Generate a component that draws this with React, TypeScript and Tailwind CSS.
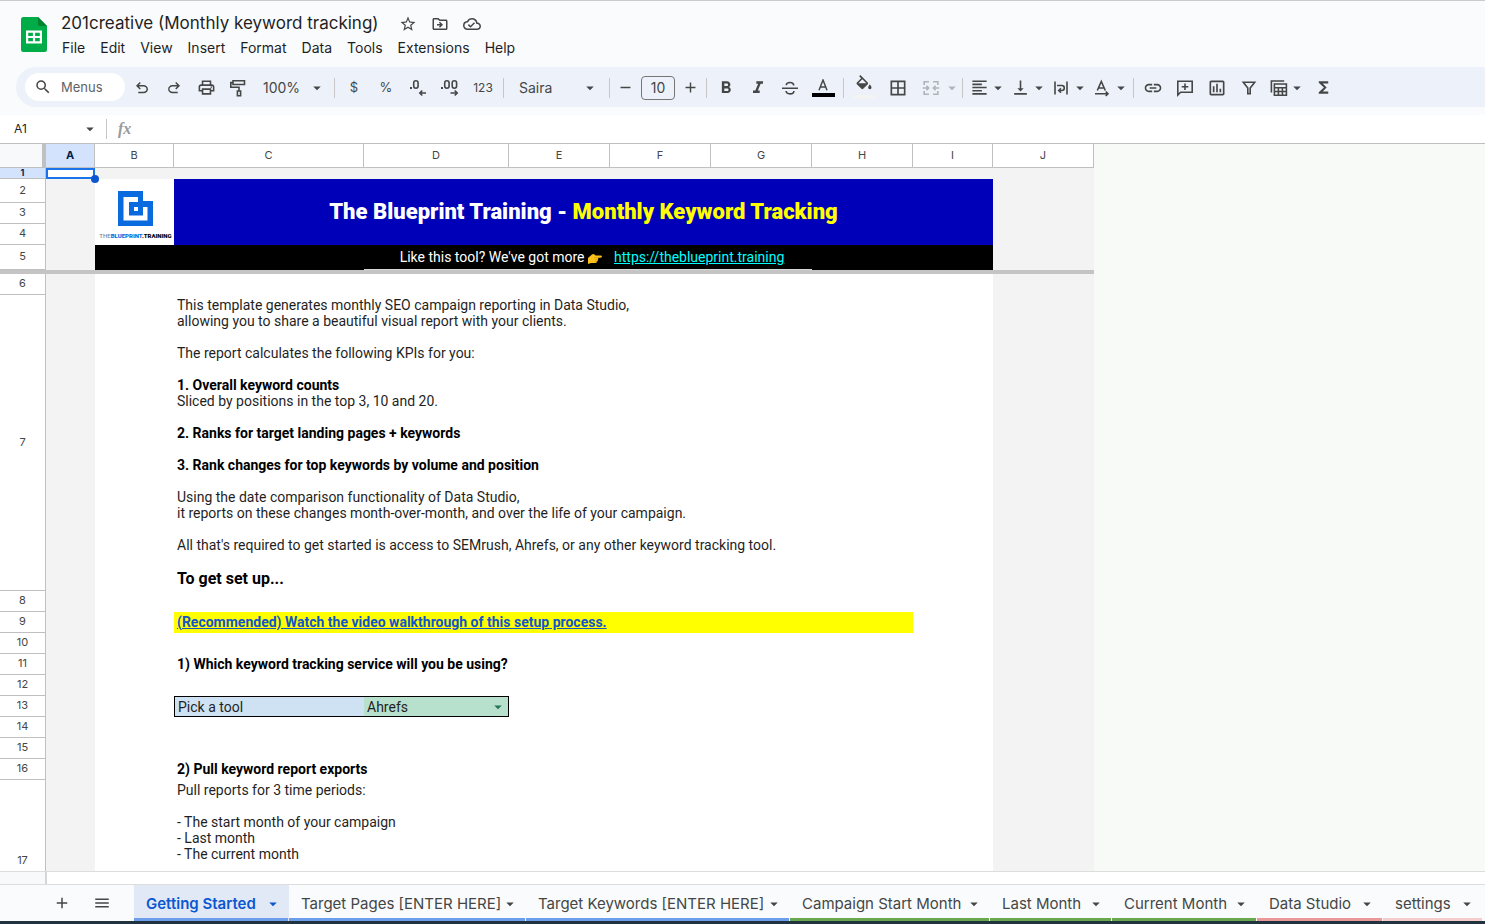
import React from "react";
import {
  MdStarBorder,
  MdOutlineDriveFileMove,
  MdOutlineCloudDone,
  MdSearch,
  MdOutlinePrint,
  MdArrowDropDown,
  MdRemove,
  MdAdd,
  MdFormatBold,
  MdFormatItalic,
  MdBorderAll,
  MdFormatAlignLeft,
  MdVerticalAlignBottom,
  MdLink,
  MdOutlineInsertChart,
  MdFunctions,
  MdMenu,
} from "react-icons/md";

const UI = "font-[Inter,'Liberation_Sans',sans-serif]";

function SheetsLogo() {
  return (
    <svg className="h-[35px] w-[26px]" viewBox="0 0 26 35" aria-hidden="true">
      <path d="M2.5 0H17l9 9v23.500a2.500 2.500 0 0 1-2.500 2.500h-21A2.500 2.500 0 0 1 0 32.500v-30A2.500 2.500 0 0 1 2.500 0Z" fill="#00ac47" />
      <path d="M17 0l9 9h-7a2 2 0 0 1-2-2Z" fill="#00832d" />
      <path fillRule="evenodd" d="M5 13.500h16v13H5ZM7.200 15.700v3.200h4.700v-3.200ZM14.100 15.700v3.200h4.700v-3.200ZM7.200 21.100v3.200h4.700v-3.200ZM14.100 21.100v3.200h4.700v-3.200Z" fill="#fff" />
    </svg>
  );
}

type IconProps = { className?: string; children: React.ReactNode };
function Stroke({ className = "size-[18px] shrink-0", children }: IconProps) {
  return (
    <svg className={className} viewBox="0 0 18 18" fill="none" stroke="currentColor" strokeWidth="1.600" aria-hidden="true">
      {children}
    </svg>
  );
}

const Undo = () => (
  <svg className="size-[18px]" viewBox="0 -960 960 960" fill="currentColor" aria-hidden="true">
    <path d="M280-200v-80h284q63 0 109.500-40T720-420q0-60-46.500-100T564-560H312l104 104-56 56-200-200 200-200 56 56-104 104h252q97 0 163.500 63T800-420q0 94-66.500 157T564-200H280Z" />
  </svg>
);
const Redo = () => (
  <svg className="size-[18px]" viewBox="0 -960 960 960" fill="currentColor" aria-hidden="true">
    <path d="M396-200q-97 0-163.500-63T166-420q0-94 66.500-157T396-640h252L544-744l56-56 200 200-200 200-56-56 104-104H396q-63 0-109.500 40T240-420q0 60 46.500 100T396-280h284v80H396Z" />
  </svg>
);
const Paint = () => (
  <Stroke>
    <path d="M4 1.800h11.500v3.700H4zM4 3.600H1.800v4.600H10V12M8.400 12h3.200v4.800H8.400z" />
  </Stroke>
);
const DecDecrease = () => (
  <Stroke>
    <path d="M2 10V8" strokeWidth="2" />
    <rect x="4.700" y="1.800" width="4.400" height="7.400" rx="2.200" />
    <path d="M17 14H11M13.300 11.500 10.800 14l2.500 2.500" />
  </Stroke>
);
const DecIncrease = () => (
  <Stroke>
    <path d="M1 10V8" strokeWidth="2" />
    <rect x="3.700" y="1.800" width="4.400" height="7.400" rx="2.200" />
    <rect x="11.200" y="1.800" width="4.400" height="7.400" rx="2.200" />
    <path d="M9.500 14h6.500M13.700 11.500l2.500 2.500-2.500 2.500" />
  </Stroke>
);
const Strike = () => (
  <Stroke>
    <path d="M1 9.200h16M12.800 6.400C12.600 4.500 11 3.500 9 3.500S5.300 4.600 5.300 6.300M5 12c.3 1.900 1.900 2.900 4 2.900s3.900-1 3.900-2.900" />
  </Stroke>
);
const Bucket = () => (
  <svg className="size-5" viewBox="0 0 24 24" fill="currentColor" aria-hidden="true">
    <path d="M16.560 8.940 7.620 0 6.210 1.410l2.380 2.380-5.150 5.150a1.490 1.490 0 0 0 0 2.120l5.500 5.500c.29.29.68.44 1.060.44s.77-.15 1.060-.44l5.500-5.500c.59-.58.59-1.530 0-2.120zM5.210 10 10 5.210 14.790 10zM19 11.500s-2 2.170-2 3.500c0 1.100.9 2 2 2s2-.9 2-2c0-1.330-2-3.500-2-3.500z" />
  </svg>
);
const Merge = () => (
  <Stroke>
    <path d="M7 2.800H2.200V6M11 2.800h4.800V6M7 15.200H2.200V12M11 15.200h4.800V12M.8 9h5.400M4.400 6.800 6.600 9l-2.200 2.200M17.200 9h-5.400M13.600 6.800 11.400 9l2.200 2.200" />
  </Stroke>
);
const Wrap = () => (
  <Stroke>
    <path d="M3 2.500v13M15 2.500v13M5 6.500h4.800a2.400 2.400 0 0 1 0 5H6.800M9 9.200l-2.300 2.300L9 13.800" />
  </Stroke>
);
const Rotate = () => (
  <Stroke>
    <path d="M4.300 11.500 8.300 2.500l4 9M5.600 9h5.400M2 14.700h12.500M12.700 12.500l2.300 2.200-2.300 2.300" />
  </Stroke>
);
const Comment = () => (
  <Stroke>
    <path d="M1.800 16V2.300h14.400v10.900H4.600ZM9 4.500v6.600M5.700 7.800h6.600" />
  </Stroke>
);
const Filter = () => (
  <Stroke>
    <path d="M3.300 3.300h11.400L10.200 9v5.700H7.800V9Z" />
  </Stroke>
);
const TableViews = () => (
  <Stroke>
    <path d="M1.400 13.500V2h12.800M4.400 5h12v11.300h-12zM4.400 8.700h12M4.400 12.500h12M8.400 8.700v7.600M12.400 8.700v7.600" />
  </Stroke>
);
const TextColor = () => (
  <Stroke className="h-3 w-[14px]">
    <path d="M3 17 9 1.500 15 17M5 12h8" strokeWidth="2.200" />
  </Stroke>
);

type ToolProps = { label: string; className?: string; children: React.ReactNode };
function Tool({ label, className = "w-8 justify-center", children }: ToolProps) {
  return (
    <button type="button" aria-label={label} className={`flex h-7 shrink-0 items-center ${className}`}>
      {children}
    </button>
  );
}
const Caret = ({ className = "" }: { className?: string }) => <MdArrowDropDown className={`size-[18px] shrink-0 ${className}`} />;
const Divider = ({ className = "" }: { className?: string }) => <span className={`h-5 w-px shrink-0 bg-[#c7c7c7] ${className}`} />;

function Toolbar() {
  return (
    <div role="toolbar" aria-label="Main" className="ml-4 flex h-10 items-center overflow-hidden rounded-l-full bg-[#edf2fa] pl-[9px] text-sm text-[#444746]">
      <button type="button" className="flex h-7 w-[100px] shrink-0 items-center gap-[9px] rounded-full bg-white pl-[9px]">
        <MdSearch className="size-[18px]" />
        <span className="text-[13px] text-[#5f6368]">Menus</span>
      </button>
      <div className="ml-px flex shrink-0 items-center pt-px">
        <Tool label="Undo"><Undo /></Tool>
        <Tool label="Redo"><Redo /></Tool>
        <Tool label="Print"><MdOutlinePrint className="size-[19px]" /></Tool>
        <Tool label="Paint format"><Paint /></Tool>
        <Tool label="Zoom" className="w-[74px] justify-between pl-[9px] pr-[2px]"><span>100%</span><Caret /></Tool>
        <Divider className="ml-[6px] mr-[3px]" />
        <Tool label="Format as currency"><span className="text-[13px]">$</span></Tool>
        <Tool label="Format as percent"><span className="text-[13px]">%</span></Tool>
        <Tool label="Decrease decimal places"><DecDecrease /></Tool>
        <Tool label="Increase decimal places"><DecIncrease /></Tool>
        <Tool label="More formats" className="w-[34px] justify-center"><span className="text-xs">123</span></Tool>
        <Divider className="ml-[3px] mr-[6px]" />
        <Tool label="Font" className="w-[90px] justify-between pl-[9px] pr-px"><span>Saira</span><Caret /></Tool>
        <Divider className="ml-[9px]" />
        <Tool label="Decrease font size" className="w-[31px] justify-center"><MdRemove className="size-[17px]" /></Tool>
        <input aria-label="Font size" defaultValue="10" className="h-6 w-[34px] shrink-0 rounded border border-[#747775] bg-transparent text-center text-sm" />
        <Tool label="Increase font size" className="w-[31px] justify-center"><MdAdd className="size-[17px]" /></Tool>
        <Divider className="mr-[3px]" />
        <Tool label="Bold"><MdFormatBold className="size-5" /></Tool>
        <Tool label="Italic"><MdFormatItalic className="size-5" /></Tool>
        <Tool label="Strikethrough"><Strike /></Tool>
        <Tool label="Text colour" className="w-[34px] flex-col justify-center gap-[2px]"><TextColor /><span className="h-1 w-[23px] bg-black" /></Tool>
        <Divider className="ml-[3px] mr-[2px]" />
        <Tool label="Fill colour" className="w-9 flex-col justify-center pb-px"><Bucket /><span className="h-1 w-[22px] bg-[#f3f3f3]" /></Tool>
        <Tool label="Borders"><MdBorderAll className="size-5" /></Tool>
        <Tool label="Merge cells" className="w-12 gap-[3px] pl-2 text-[#b0b3b8]"><Merge /><Caret /></Tool>
        <Divider className="mr-[7px]" />
        <Tool label="Horizontal align" className="w-[41px]"><MdFormatAlignLeft className="size-[19px]" /><Caret /></Tool>
        <Tool label="Vertical align" className="w-[41px]"><MdVerticalAlignBottom className="size-[19px]" /><Caret /></Tool>
        <Tool label="Text wrapping" className="w-[41px] gap-px"><Wrap /><Caret /></Tool>
        <Tool label="Text rotation" className="w-10 gap-px"><Rotate /><Caret /></Tool>
        <Divider className="mr-[3px]" />
        <Tool label="Insert link"><MdLink className="size-5" /></Tool>
        <Tool label="Insert comment"><Comment /></Tool>
        <Tool label="Insert chart"><MdOutlineInsertChart className="size-5" /></Tool>
        <Tool label="Create a filter"><Filter /></Tool>
        <Tool label="Filter views" className="w-[42px] pl-[5px]"><TableViews /><Caret /></Tool>
        <Tool label="Functions"><MdFunctions className="size-[19px]" /></Tool>
      </div>
    </div>
  );
}

const menus = ["File", "Edit", "View", "Insert", "Format", "Data", "Tools", "Extensions", "Help"];

function Header() {
  return (
    <header className="flex h-[66px] shrink-0 border-t border-[#c9cccb] pl-[21px]">
      <div className="pt-[16px]"><SheetsLogo /></div>
      <div className="pl-[14px] pt-[10px]">
        <div className="flex h-[26px] items-center text-[#1f1f1f]">
          <h1 className="text-[17px]">201creative (Monthly keyword tracking)</h1>
          <div className="ml-5 flex gap-[14px] text-[#444746]">
            <button type="button" aria-label="Star"><MdStarBorder className="size-[18px]" /></button>
            <button type="button" aria-label="Move"><MdOutlineDriveFileMove className="size-[18px]" /></button>
            <button type="button" aria-label="Document status"><MdOutlineCloudDone className="size-[18px]" /></button>
          </div>
        </div>
        <nav className="flex gap-[15px] pl-px text-sm leading-[22px] text-[#1f1f1f]">
          {menus.map((m) => (
            <button key={m} type="button">{m}</button>
          ))}
        </nav>
      </div>
    </header>
  );
}

function BlueprintLogo() {
  return (
    <div className="flex h-[65px] flex-col items-center bg-white pl-[2px] pt-[11px]">
      <svg className="size-[35px]" viewBox="0 0 35 35" aria-hidden="true">
        <path fillRule="evenodd" fill="#0a6bdf" d="M0 0h25v10h10v25H0ZM5.500 6v23.500h24V16H25v8.500H11V11h9V6Z" />
        <path d="M16 16h4v4h-4z" fill="#fff" />
      </svg>
      <div className="mt-[6px] whitespace-nowrap font-[Roboto,sans-serif] text-[6px] font-black leading-[8px] text-black">
        <span className="font-medium text-[#7a879c]">THE</span><span className="text-[#0a6bdf]">BLUEPRINT</span>.TRAINING
      </div>
    </div>
  );
}

const colLetters = ["A", "B", "C", "D", "E", "F", "G", "H", "I", "J"];

function RowHead({ n, h = "h-[21px]" }: { n: number; h?: string }) {
  return (
    <th scope="row" className={`border-b border-r border-[#c0c0c0] bg-white px-0 pb-[2px] pt-0 text-center text-[11px] font-normal leading-[14px] text-[#444746] ${UI} ${h}`}>{n}</th>
  );
}
const Shade = () => <td className="bg-[#f3f3f3] p-0" />;

function PlainRow({ n, children }: { n: number; children?: React.ReactNode }) {
  return (
    <tr>
      <RowHead n={n} />
      <Shade />
      <td className="p-0" />
      <td colSpan={7} className="whitespace-nowrap px-[3px] pb-[2px] pt-0">{children}</td>
      <Shade />
    </tr>
  );
}

function Sheet() {
  return (
    <main className="min-h-0 flex-1 overflow-hidden border-b border-[#dcdedd] bg-[#f8faf7]">
      <table className="w-[1094px] table-fixed border-separate border-spacing-0 bg-white font-[Roboto,sans-serif] text-sm leading-4 text-[#1f1f1f]">
        <colgroup>
          <col className="w-[46px]" />
          <col className="w-[49px]" />
          <col className="w-[79px]" />
          <col className="w-[190px]" />
          <col className="w-[145px]" />
          <col className="w-[101px]" />
          <col className="w-[101px]" />
          <col className="w-[101px]" />
          <col className="w-[101px]" />
          <col className="w-[80px]" />
          <col className="w-[101px]" />
        </colgroup>
        <thead>
          <tr>
            <td className="h-6 border-b border-r-4 border-[#c0c0c0] bg-[#f8f9fa] p-0" />
            {colLetters.map((c) => (
              <th
                key={c}
                scope="col"
                className={`h-6 border-b border-r border-[#c0c0c0] px-0 pb-[2px] pt-0 text-[11px] leading-[14px] ${UI} ${c === "A" ? "bg-[#d3e3fd] font-bold text-[#041e49]" : "bg-white font-normal text-[#444746]"}`}
              >
                {c}
              </th>
            ))}
          </tr>
        </thead>
        <tbody>
          <tr>
            <th scope="row" className={`h-[11px] border-b border-r border-[#c0c0c0] bg-[#d3e3fd] p-0 text-center text-[9px] font-bold leading-[10px] text-[#041e49] ${UI}`}>1</th>
            <td className="relative border-2 border-[#1a73e8] bg-white p-0">
              <span className="absolute -bottom-[6px] -right-[6px] z-10 size-2 rounded-full bg-[#0b57d0]" />
            </td>
            <td colSpan={9} className="bg-[#f3f3f3] p-0" />
          </tr>
          <tr>
            <RowHead n={2} h="h-6" />
            <td rowSpan={4} className="bg-[#f3f3f3] p-0" />
            <td rowSpan={3} className="p-0"><BlueprintLogo /></td>
            <td colSpan={7} rowSpan={3} className="bg-[#0000b8] p-0 text-center text-[22px] font-black leading-7 text-white">
              The Blueprint Training - <span className="text-[#ffff00]">Monthly Keyword Tracking</span>
            </td>
            <td rowSpan={4} className="bg-[#f3f3f3] p-0" />
          </tr>
          <tr><RowHead n={3} /></tr>
          <tr><RowHead n={4} /></tr>
          <tr>
            <RowHead n={5} h="h-[25px]" />
            <td colSpan={2} className="bg-black p-0" />
            <td colSpan={4} className="whitespace-nowrap border-b border-[#d9d9d9] bg-black p-0 pl-2 text-center leading-5 text-white">
              Like this tool? We've got more{" "}
              <svg className="inline-block h-[11px] w-[14px]" viewBox="0 0 14 11" role="img" aria-label="pointing right">
                <path d="M0 5 4 1.500Q5 .6 6.500 1.500L7.500 2.500H12.500Q14 2.700 14 3.600T12.500 4.700H10Q10.800 6 9.800 6.800 10 8 9 8.600 8.800 10 7.500 10H3L0 11Z" fill="#fcc21b" />
                <path d="M6 4.700h4M7 6.800h2.800M6.500 8.600H9" stroke="#d98c00" strokeWidth=".6" />
              </svg>
              <a href="https://theblueprint.training" className="ml-3 text-[#00ffff] underline">https://theblueprint.training</a>
            </td>
            <td colSpan={2} className="bg-black p-0" />
          </tr>
          <tr><td colSpan={11} className="h-1 bg-[#c4c4c4] p-0" /></tr>
          <PlainRow n={6} />
          <tr>
            <RowHead n={7} h="h-[296px]" />
            <Shade />
            <td className="p-0" />
            <td colSpan={7} className="px-[3px] pb-0 pt-[2px] align-top">
              <p>This template generates monthly SEO campaign reporting in Data Studio,<br />allowing you to share a beautiful visual report with your clients.</p>
              <p className="mt-4">The report calculates the following KPIs for you:</p>
              <p className="mt-4"><b className="text-black">1. Overall keyword counts</b><br />Sliced by positions in the top 3, 10 and 20.</p>
              <p className="mt-4 font-bold text-black">2. Ranks for target landing pages + keywords</p>
              <p className="mt-4 font-bold text-black">3. Rank changes for top keywords by volume and position</p>
              <p className="mt-4">Using the date comparison functionality of Data Studio,<br />it reports on these changes month-over-month, and over the life of your campaign.</p>
              <p className="mt-4">All that's required to get started is access to SEMrush, Ahrefs, or any other keyword tracking tool.</p>
              <p className="mt-4 text-base font-bold leading-5 text-black">To get set up...</p>
            </td>
            <Shade />
          </tr>
          <PlainRow n={8} />
          <tr>
            <RowHead n={9} />
            <Shade />
            <td className="p-0" />
            <td colSpan={6} className="whitespace-nowrap bg-[#ffff00] px-[3px] pb-[2px] pt-0">
              <a href="#walkthrough" className="font-bold text-[#1155cc] underline">(Recommended) Watch the video walkthrough of this setup process.</a>
            </td>
            <td className="p-0" />
            <Shade />
          </tr>
          <PlainRow n={10} />
          <PlainRow n={11}><label htmlFor="tool" className="font-bold text-black">1) Which keyword tracking service will you be using?</label></PlainRow>
          <PlainRow n={12} />
          <tr>
            <RowHead n={13} />
            <Shade />
            <td className="p-0" />
            <td className="border-y border-l border-black bg-[#cfe2f3] px-[3px] py-0">Pick a tool</td>
            <td className="border-y border-r border-black bg-[#b7e1cd] p-0">
              <div className="flex h-[19px] items-center">
                <select id="tool" defaultValue="Ahrefs" className="h-[19px] min-w-0 flex-1 appearance-none bg-transparent pl-[3px] text-sm leading-4">
                  <option>Ahrefs</option>
                  <option>SEMrush</option>
                </select>
                <Caret className="mr-px text-[#26745a]" />
              </div>
            </td>
            <td colSpan={5} className="p-0" />
            <Shade />
          </tr>
          <PlainRow n={14} />
          <PlainRow n={15} />
          <PlainRow n={16}><b className="text-black">2) Pull keyword report exports</b></PlainRow>
          <tr>
            <RowHead n={17} h="h-[163px]" />
            <Shade />
            <td className="p-0" />
            <td colSpan={7} className="px-[3px] pb-0 pt-[2px] align-top">
              <p>Pull reports for 3 time periods:</p>
              <ul className="mt-4">
                <li>- The start month of your campaign</li>
                <li>- Last month</li>
                <li>- The current month</li>
              </ul>
            </td>
            <Shade />
          </tr>
        </tbody>
      </table>
    </main>
  );
}

const tabs = [
  { name: "Getting Started", w: "w-[155px]", line: "bg-[#6d9eeb]", active: true },
  { name: "Target Pages [ENTER HERE]", w: "w-[237px]", line: "bg-[#6d9eeb]" },
  { name: "Target Keywords [ENTER HERE]", w: "w-[264px]", line: "bg-[#6d9eeb]" },
  { name: "Campaign Start Month", w: "w-[200px]", line: "bg-[#6aa84f]" },
  { name: "Last Month", w: "w-[122px]", line: "bg-[#6aa84f]" },
  { name: "Current Month", w: "w-[145px]", line: "bg-[#6aa84f]" },
  { name: "Data Studio", w: "w-[126px]", line: "bg-[#ea9999]" },
  { name: "settings", w: "w-[100px]", line: "bg-[#f4cccc]" },
];

export default function App() {
  return (
    <div className={`flex h-screen flex-col overflow-hidden bg-[#f9fbfd] ${UI}`}>
      <Header />
      <div className="shrink-0 pt-px"><Toolbar /></div>
      <div className="mt-2 flex h-[29px] shrink-0 items-center border-b border-[#c0c0c0] bg-white text-[#1f1f1f]">
        <input aria-label="Name box" defaultValue="A1" className="ml-[14px] w-[67px] bg-transparent text-xs" />
        <Caret className="text-[#444746]" />
        <Divider className="ml-[7px] mr-[11px]" />
        <span className="font-['Liberation_Serif',serif] text-base font-bold italic text-[#9a9a9a]">fx</span>
      </div>
      <Sheet />
      <div className="flex h-3 shrink-0 bg-white"><span className="w-[47px] border-r-2 border-[#d5d7d6] bg-[#f8f9fa]" /></div>
      <footer className="flex h-[37px] shrink-0 border-t border-[#dcdedd] text-[15px] text-[#444746]">
        <div className="flex w-[134px] shrink-0 items-center gap-[22px] pl-[53px]">
          <button type="button" aria-label="Add sheet"><MdAdd className="size-[18px]" /></button>
          <button type="button" aria-label="All sheets"><MdMenu className="size-[18px]" /></button>
        </div>
        {tabs.map((t) => (
          <button key={t.name} type="button" className={`flex shrink-0 flex-col ${t.w} ${t.active ? "bg-[#e1e9f7] font-semibold text-[#0b57d0]" : ""}`}>
            <span className="flex w-full flex-1 items-center justify-between whitespace-nowrap pl-3 pr-[7px] pt-[5px]">{t.name}<Caret /></span>
            <span className="flex h-[3px] w-full pr-px"><span className={`flex-1 ${t.line}`} /></span>
          </button>
        ))}
      </footer>
      <div className="h-[3px] shrink-0 bg-[#20333f]" />
    </div>
  );
}
